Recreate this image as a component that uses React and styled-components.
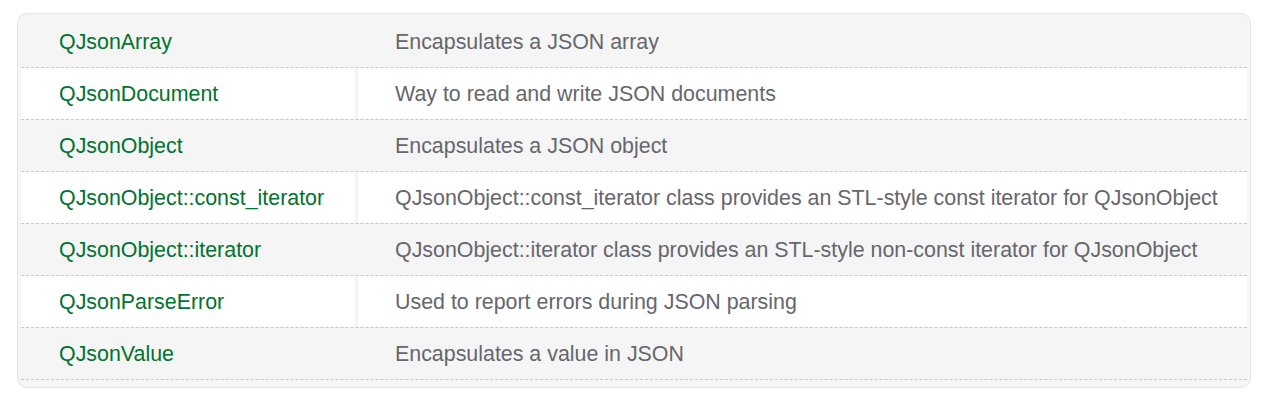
import React from 'react';
import styled, { createGlobalStyle } from 'styled-components';

const GlobalStyle = createGlobalStyle`
    body {
        margin: 0;
        background: #fff;
        font-family: "Liberation Sans", Arial, sans-serif;
    }
`;

const Page = styled.div`
    padding: 13px 32px 0 17px;
`;

const Panel = styled.div`
    background-color: #f5f5f5;
    border: 1px solid #e4e4e4;
    border-radius: 10px;
    padding: 2px 3px 7px 3px;
`;

const Row = styled.div`
    display: grid;
    grid-template-columns: 334px 1fr;
    column-gap: 3px;
    border-bottom: 1px dashed #c9c9c9;
`;

const Cell = styled.div`
    height: 51px;
    display: flex;
    align-items: center;
    padding-top: 2px;
    box-sizing: border-box;
    padding-left: ${props => (props.link ? '38px' : '37px')};
    font-size: 21.4px;
    background-color: ${props => (props.even ? '#fff' : 'transparent')};
    color: ${props => (props.link ? '#00732f' : '#66666e')};
    white-space: nowrap;
`;

const classes = [
    ['QJsonArray', 'Encapsulates a JSON array'],
    ['QJsonDocument', 'Way to read and write JSON documents'],
    ['QJsonObject', 'Encapsulates a JSON object'],
    ['QJsonObject::const_iterator', 'QJsonObject::const_iterator class provides an STL-style const iterator for QJsonObject'],
    ['QJsonObject::iterator', 'QJsonObject::iterator class provides an STL-style non-const iterator for QJsonObject'],
    ['QJsonParseError', 'Used to report errors during JSON parsing'],
    ['QJsonValue', 'Encapsulates a value in JSON'],
];

const App = () => (
    <Page>
        <GlobalStyle />
        <Panel>
            {classes.map(([name, desc], i) => (
                <Row key={name}>
                    <Cell link even={i % 2 === 1}>{name}</Cell>
                    <Cell even={i % 2 === 1}>{desc}</Cell>
                </Row>
            ))}
        </Panel>
    </Page>
);

export default App;
